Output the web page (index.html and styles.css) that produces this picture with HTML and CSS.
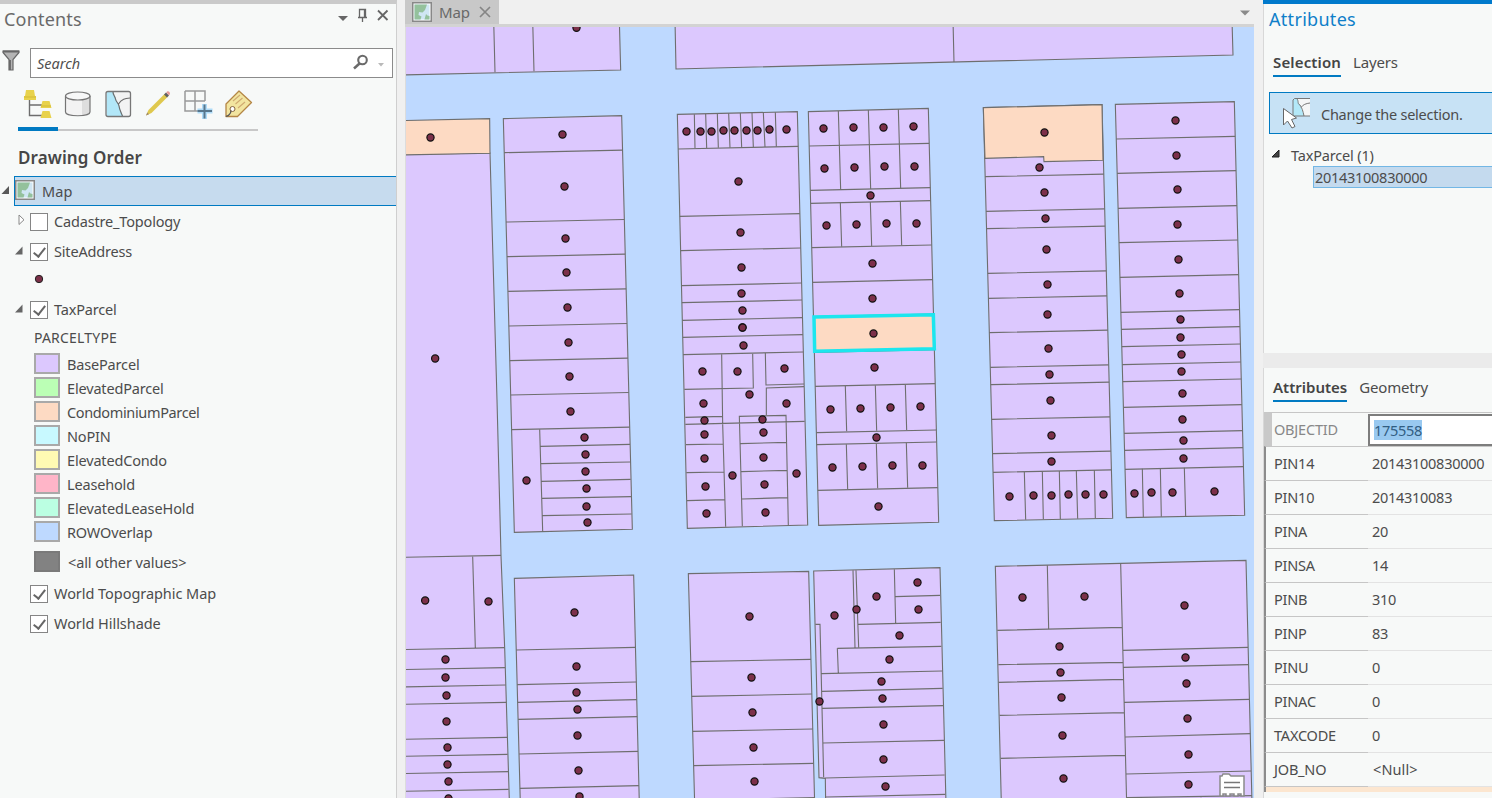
FILE: index.html
```html
<!DOCTYPE html>
<html lang="en">
<head>
<meta charset="utf-8">
<title>Map</title>
<link rel="stylesheet" href="styles.css">
</head>
<body>
<div class="app">
  <aside class="contents">
    <header class="pane-head">
      <h1>Contents</h1>
      <svg class="head-icons" width="60" height="20" viewBox="0 0 60 20"><path d="M2 11h10l-5 5z" fill="#666"/><path d="M23.500 4.500h6v8h-6zM22 12.500h9M26.500 13v4M28.500 5v7" fill="none" stroke="#666" stroke-width="1.300"/><path d="M42 5.500l9.500 9.500M51.500 5.500L42 15" stroke="#666" stroke-width="1.800"/></svg>
    </header>
    <div class="search-row">
      <svg width="18" height="22" viewBox="0 0 18 22"><path d="M1 1h16v1.500l-6 7V20H7V9.500l-6-7z" fill="#b4b4b4" stroke="#666" stroke-width="1.200"/><path d="M1 1.500h16M8 10v10" stroke="#666" stroke-width="1.800"/></svg>
      <div class="search"><span>Search</span>
        <svg width="36" height="20" viewBox="0 0 36 20"><circle cx="10.500" cy="7" r="4.300" fill="none" stroke="#6a6a6a" stroke-width="2.100"/><path d="M7.500 10.500l-5.500 5" stroke="#6a6a6a" stroke-width="2.500"/><path d="M26 10h6l-3 3.500z" fill="#b9b9b9"/></svg>
      </div>
    </div>
    <div class="tools">
      <svg width="240" height="34" viewBox="18 88 240 34">
        <path d="M29.500 100v15.500H42M29.500 105H42" fill="none" stroke="#6d6d6d" stroke-width="1.400"/>
        <path d="M26 90h8l1 6h1v4H24v-4h1zM42.500 101h7l2 7H40.500zM42.500 111h7l2 7H40.500z" fill="#e8d24c"/><path d="M24 97h12M41 106h10" stroke="#d3ba35"/>
        <path d="M65.500 96v16c0 5 24.500 5 24.500 0V96" fill="#f3f3f3"/><path d="M82 99l8-2.500V112c0 2-4 3.300-8 3.800z" fill="#dedede"/><path d="M65.500 96v16c0 5 24.500 5 24.500 0V96" fill="none" stroke="#757575" stroke-width="1.200"/><ellipse cx="77.750" cy="96" rx="12.250" ry="4" fill="#f7f8f8" stroke="#757575" stroke-width="1.200"/>
        <rect x="106" y="91.500" width="24.500" height="25" rx="2" fill="#f3f3f3"/><path d="M106.500 92h7c0 3 2 4 2.500 7 .5 3 3 4 3.500 7 .5 4 2 6 3.500 10h-16.500z" fill="#b2e7f8"/><path d="M113 92c0 3 2 4 2.500 7 .5 3 3 4 3.500 7 .5 4 2 6 3.500 10M118.500 104c3-5 7-5.500 11.500-6" fill="none" stroke="#6c6c6c" stroke-width="1.200"/><rect x="106" y="91.500" width="24.500" height="25" rx="2" fill="none" stroke="#777" stroke-width="1.300"/>
        <path d="M146 115.500l2.500-5.500 16-16 3 3-16 16z" fill="#dfc84e"/><path d="M146 115.500l1.300-3 1.700 1.700z" fill="#9d8870"/><path d="M164 94.500l2-2 3 3-2 2z" fill="#606060"/><path d="M166.200 92.200l1-.8c1.500-.5 3.500 1.500 2.500 3l-.8.800z" fill="#e89a98"/>
        <path d="M185 91h20v10M185 91v20h13M195 91v20M185 101h20" fill="none" stroke="#999" stroke-width="1.500"/><path d="M204.500 104v15M197.500 111h15" stroke="#aedbf7" stroke-width="5"/><path d="M204.500 104.500v14M197.500 111h14.500" stroke="#58778c" stroke-width="2"/>
        <path d="M226 104l13-13 12.500 11.500-14 14H226z" fill="#f2e5a0" stroke="#b48646" stroke-width="1.300" stroke-linejoin="round"/><path d="M233 101l7-6M235.500 104l7-6M238 108l7-6" stroke="#cfaa71" stroke-width="1.100"/><circle cx="232.500" cy="109" r="2.500" fill="#fff" stroke="#85633e"/><path d="M231 110.500c0 4-4 6-5 5.500" fill="none" stroke="#555" stroke-width="1.300"/>
      </svg>
    </div>
    <div class="tool-line"><i></i></div>
    <h2>Drawing Order</h2>
    <div class="map-row">
      <svg width="14" height="30" viewBox="0 0 14 30"><path d="M1.500 18L9 10v8z" fill="#595959"/></svg>
      <div class="selected"><svg class="map-icon" width="20" height="20" viewBox="0 0 20 20"><rect x=".75" y=".75" width="18.500" height="18.500" fill="#fff" stroke="#888" stroke-width="1.500"/><path d="M2.500 2.500h15v15h-15z" fill="#cfe6f3"/><path d="M2.500 2.500H15l-2 5.500-2.500 2.500-3.500-.5-.5 3 3 1.500L8.500 17.500h-6zM14 12l1.500 1.500 2 .5v3.500h-5z" fill="#94c19c"/></svg><span>Map</span></div>
    </div>
    <div class="row closed"><i class="arrow"><svg width="8" height="12" viewBox="0 0 8 12"><path d="M1 1l5 4.800L1 10.500z" fill="#fff" stroke="#888"/></svg></i><b class="check"></b><span>Cadastre_Topology</span></div>
    <div class="row"><i class="arrow"><svg width="9" height="9"><path d="M1 8.500L8.500.5v8z" fill="#666"/></svg></i><b class="check on"></b><span>SiteAddress</span></div>
    <div class="point-row"><svg width="10" height="10"><circle cx="5" cy="5" r="3.700" fill="#7b3048" stroke="#222"/></svg></div>
    <div class="row"><i class="arrow"><svg width="9" height="9"><path d="M1 8.500L8.500.5v8z" fill="#666"/></svg></i><b class="check on"></b><span>TaxParcel</span></div>
    <div class="field">PARCELTYPE</div>
    <ul class="legend">
      <li><i class="base"></i>BaseParcel</li>
      <li><i class="elevated"></i>ElevatedParcel</li>
      <li><i class="condo"></i>CondominiumParcel</li>
      <li><i class="nopin"></i>NoPIN</li>
      <li><i class="econdo"></i>ElevatedCondo</li>
      <li><i class="lease"></i>Leasehold</li>
      <li><i class="elease"></i>ElevatedLeaseHold</li>
      <li><i class="rowo"></i>ROWOverlap</li>
      <li class="other"><i></i>&lt;all other values&gt;</li>
    </ul>
    <div class="row base-layer"><i class="arrow"></i><b class="check on"></b><span>World Topographic Map</span></div>
    <div class="row base-layer"><i class="arrow"></i><b class="check on"></b><span>World Hillshade</span></div>
  </aside>

  <main class="view">
    <div class="tabs">
      <div class="tab"><svg width="20" height="20" viewBox="0 0 20 20"><rect x=".75" y=".75" width="18.500" height="18.500" fill="#fff" stroke="#888" stroke-width="1.500"/><path d="M2.500 2.500h15v15h-15z" fill="#cfe6f3"/><path d="M2.500 2.500H15l-2 5.500-2.500 2.500-3.500-.5-.5 3 3 1.500L8.500 17.500h-6zM14 12l1.500 1.500 2 .5v3.500h-5z" fill="#94c19c"/></svg><span>Map</span><svg width="12" height="12"><path d="M1 1l10 10M11 1L1 11" stroke="#858585" stroke-width="1.700"/></svg></div>
      <svg class="caret" width="10" height="6"><path d="M0 .5h10L5 5.500z" fill="#8a8a8a"/></svg>
    </div>
    <svg class="map" id="map" width="849" height="771" viewBox="406 27 848 771"></svg>
  </main>

  <aside class="attributes">
    <h1>Attributes</h1>
    <nav class="subtabs"><b>Selection</b><span>Layers</span></nav>
    <div class="change">
      <svg width="30" height="34" viewBox="0 0 30 34"><path d="M10 2.500h17V20H10z" fill="#f5f6f6"/><path d="M10 2.500h4c2 2 0 5 3 6 1 4 3 6 4 11.500H10z" fill="#b3e8f8"/><path d="M27 2.500H11.500L10 4v16h17M14 3c2 2 0 5 3 6 2 3 3 6 4 11M18 11.500c2-3 5-4 9-4.500" fill="none" stroke="#777"/><path d="M.5 12.500v16.500l4-4 4.500 7 3-1.500-3.500-7 5-1.500z" fill="#fff" stroke="#666"/></svg>
      <span>Change the selection.</span>
    </div>
    <div class="tree"><svg width="9" height="9"><path d="M1 8L8 1v7z" fill="#444" stroke="#222"/></svg><span>TaxParcel (1)</span></div>
    <div class="tree-item">20143100830000</div>
    <div class="splitter"></div>
    <nav class="subtabs lower"><b>Attributes</b><span>Geometry</span></nav>
    <div class="grid">
      <div class="attr active"><span>OBJECTID</span><div><mark>175558</mark></div></div>
      <div class="attr"><span>PIN14</span><div>20143100830000</div></div>
      <div class="attr"><span>PIN10</span><div>2014310083</div></div>
      <div class="attr"><span>PINA</span><div>20</div></div>
      <div class="attr"><span>PINSA</span><div>14</div></div>
      <div class="attr"><span>PINB</span><div>310</div></div>
      <div class="attr"><span>PINP</span><div>83</div></div>
      <div class="attr"><span>PINU</span><div>0</div></div>
      <div class="attr"><span>PINAC</span><div>0</div></div>
      <div class="attr"><span>TAXCODE</span><div>0</div></div>
      <div class="attr"><span>JOB_NO</span><div class="null">&lt;Null&gt;</div></div>
      <div class="band"></div>
    </div>
  </aside>
</div>
<script src="map.js"></script>
</body>
</html>
```
FILE: styles.css
```css
* { box-sizing: border-box; }
body { margin: 0; background: #f0f0f0; font: 14.5px/20px "Noto Sans", "Open Sans", sans-serif; color: #4c4c4c; letter-spacing: -0.17px; overflow: hidden; }
h1, h2, ul { margin: 0; padding: 0; font-weight: 400; list-style: none; }
h1 { font-size: 18px; line-height: 24px; letter-spacing: 0.2px; }
svg { display: block; flex: none; }
.app { display: grid; grid-template-columns: 397px 849px 230px; column-gap: 8px; width: 1492px; height: 798px; }

.contents { background: #f7f9f8; border-top: 4px solid #cacaca; border-right: 1px solid #cfcfcf; overflow: hidden; }
.pane-head { display: flex; justify-content: space-between; height: 44px; padding: 3px 0 0 4px; color: #6a6a6a; }
.head-icons { margin-top: -2px; }
.search-row { display: flex; height: 30px; padding: 0 3px 0 2px; gap: 10px; }
.search-row > svg { margin-top: 2px; }
.search { flex: 1; height: 30px; display: flex; justify-content: space-between; align-items: center; border: 1px solid #8b8b8b; background: #fff; padding: 0 4px 0 6px; font-style: italic; color: #505050; letter-spacing: 0; }
.tools { height: 49px; padding: 10px 0 0 18px; }
.tool-line { width: 240px; height: 4px; margin-left: 18px; border-bottom: 2px solid #c8c8c8; }
.tool-line i { display: block; width: 40px; height: 4px; background: #007ac2; }
.contents h2 { height: 45px; padding: 17px 0 0 18px; font-size: 17px; font-weight: 600; line-height: 20px; letter-spacing: 0.1px; color: #464646; }
.map-row { display: flex; height: 31px; }
.selected { flex: 1; height: 30px; display: flex; align-items: center; gap: 7px; border: 1px solid #007ac2; border-right-width: 0; background: #c6dbee; }
.selected span { letter-spacing: 0.1px; }
.map-icon { margin-top: -2px; }
.row { height: 30px; display: flex; align-items: center; }
.row span { margin-top: -2px; }
.base-layer span { letter-spacing: -0.05px; }
.arrow { width: 30px; padding: 0 0 4px 14px; }
.closed .arrow { padding-left: 18px; }
.check { width: 18px; height: 18px; margin-right: 6px; background: #fff; border: 1px solid #858585; }
.check.on::after { content: ""; display: block; width: 5px; height: 10px; margin: 1px 0 0 5px; border: solid #666; border-width: 0 2px 2px 0; transform: rotate(38deg); }
.point-row { height: 28px; padding: 7px 0 0 34px; }
.field { height: 27px; padding: 3px 0 0 34px; letter-spacing: 0.2px; font-size: 14px; }
.legend li { height: 24px; display: flex; align-items: center; gap: 7px; padding-left: 34px; }
.legend i { width: 26px; height: 21px; margin-top: -1px; border: 2px solid #a9a9a9; background: #dcc8fe; }
.legend .elevated { background: #bbffb5; }
.legend .condo { background: #fddac3; }
.legend .nopin { background: #c8f9ff; }
.legend .econdo { background: #fffab3; }
.legend .lease { background: #ffb5c8; }
.legend .elease { background: #bbffe2; }
.legend .rowo { background: #bed9ff; }
.legend li:nth-child(3) { letter-spacing: -0.36px; }
.legend li:nth-child(7) { letter-spacing: -0.08px; }
.legend .other { height: 35px; gap: 8px; letter-spacing: -0.1px; }
.legend .other i { background: #828282; border-color: #7a7a7a; }

.view { display: flex; flex-direction: column; overflow: hidden; }
.tabs { height: 27px; display: flex; justify-content: space-between; border-bottom: 3px solid #d3d3d3; padding-right: 4px; }
.tab { width: 94px; height: 24px; display: flex; align-items: center; gap: 7px; padding-left: 7px; background: #c8c8c8; color: #686868; font-size: 15px; }
.tab svg:last-child { margin-left: 2px; }
.caret { margin-top: 10px; }
.map { background: #bed9ff; border-left: 1px solid #dcdcdc; }
.map .parcel, .map .line { stroke: #6e6e6e; stroke-width: 1.1px; vector-effect: non-scaling-stroke; }
.map .parcel { fill: #dcc8fe; }
.map .condo { fill: #fddac3; }
.map .line { fill: none; }
.map .picked { fill: #fddac3; stroke: #1ce6ee; stroke-width: 3.5px; vector-effect: non-scaling-stroke; }
.map .dot { fill: #7c304a; stroke: #101010; stroke-width: 1.2px; vector-effect: non-scaling-stroke; }

.attributes { margin-left: 1px; width: 229px; background: #f7f9f8; border-top: 4px solid #007acc; box-shadow: inset 1px 0 #d8d8d8; overflow: hidden; }
.attributes h1 { height: 48px; padding: 3px 0 0 6px; color: #0f7fc9; letter-spacing: 0.3px; }
.subtabs { height: 40px; display: flex; gap: 12px; padding-left: 10px; font-size: 15px; }
.subtabs > * { height: 25px; }
.subtabs b { font-weight: 600; letter-spacing: 0.15px; border-bottom: 2px solid #007ac2; color: #444; }
.change { height: 42px; margin-left: 6px; display: flex; align-items: center; gap: 8px; padding-left: 13px; border: 1px solid #007ac2; border-right: 0; background: #c7e2f5; white-space: nowrap; letter-spacing: -0.25px; }
.change span { margin-top: 2px; }
.tree { height: 32px; display: flex; align-items: center; gap: 11px; padding: 9px 0 0 8px; }
.tree svg { margin-top: -3px; }
.tree-item { margin-left: 50px; height: 22px; padding-left: 1px; border: 1px solid #73b7e5; border-right: 0; background: #c4daee; letter-spacing: -0.28px; }
.splitter { margin-top: 165px; height: 15px; background: #ebebeb; }
.lower { height: 44px; padding-top: 9px; }
.lower b { letter-spacing: 0; }
.grid { width: 232px; padding-left: 1px; }
.attr { display: grid; grid-template-columns: 102px 1fr; height: 34px; border-left: 2px solid #8c8c8c; border-top: 1px solid #c6c6c6; line-height: 33px; white-space: nowrap; }
.attr span { padding-left: 8px; letter-spacing: -0.2px; }
.attr div { padding-left: 4px; border-bottom: 1px solid #e3e3e3; letter-spacing: -0.28px; }
.attr .null { padding-left: 5px; letter-spacing: 0.1px; }
.attr.active { border-left: 8px solid #c9c9c9; grid-template-columns: 96px 1fr; }
.attr.active span { padding-left: 2px; color: #888; }
.attr.active div { margin-top: 1px; height: 32px; border: 2px solid #7d7d7d; background: #fff; padding: 4px 0 0 4px; line-height: 20px; }
mark { display: inline-block; background: #99c9f0; color: #325d82; }
.band { height: 6px; border-left: 2px solid #8c8c8c; border-top: 1px solid #c6c6c6; background: #fce6d0; }
```
FILE: map.js
```js
// Parcel geometry, grouped in local sheets drawn at a third of their unit size.
// cols: [corner quad tl,tr,br,bl], left-edge y of each lot line, fall from left to right
const sheets = [
  { x: 400, y: 0,
    parcels: ["M0 60H658L662 210L0 225Z", "M825 60H2496L2499 165L828 207Z", "M0 464L270 459L291 1200L303 1667L314 1943L328 2400H0Z"],
    condos: ["M0 362L269 356L270 460L0 465Z"],
    lines: "M281 60L285 217M398 60L402 214M1659 60L1662 186",
    cols: [[[310, 356, 665, 347, 697, 1588, 343, 1597], [458, 666, 770, 874, 978, 1082, 1185, 1289], 7.5]],
    dots: [529, 83, 91, 412, 105, 1075, 487, 403, 493, 559, 496, 715, 499, 817, 502, 922, 505, 1027, 508, 1129, 511, 1234] },
  { x: 400, y: 400,
    lines: "M0 472L303 466M218 469L226 743M0 749L314 743M0 809L315 803M0 861L317 855M0 913L319 907M0 1018L321 1012M0 1069L323 1063M0 1121L324 1115M0 1174L326 1168M419 88L428 393M422 139L690 133M423 191L691 186M424 244L692 238M426 295L693 290M427 347L695 342",
    cols: [[[343, 535, 701, 525, 718, 1210, 361, 1210], [750, 854, 907, 958, 1062, 1165], 8]],
    dots: [75, 601, 265, 604, 136, 778, 136, 832, 139, 886, 139, 964, 142, 1042, 142, 1093, 145, 1144, 145, 1195, 379, 241, 553, 112, 556, 163, 556, 214, 559, 265, 559, 319, 562, 367, 523, 637, 529, 799, 529, 877, 532, 928, 532, 1006, 535, 1111, 538, 1189] },
  { x: 670, y: 90,
    cols: [[[22, 73, 382, 65, 413, 1305, 52, 1315], [177, 379, 482, 587, 638, 691, 742, 794], 8],
           [[415, 65, 775, 55, 806, 1297, 446, 1306], [168, 301, 340, 473, 577, 680, 787, 889, 1028, 1064, 1201], 8]],
    lines: "M73 73L75 174M107 72L110 174M142 71L145 173M176 70L180 173M211 69L215 172M246 69L250 171M280 68L285 171M316 67L319 170M505 63L512 299M595 60L602 297M685 58L692 295M511 338L515 470M601 336L605 468M691 333L695 466",
    dots: [49, 124, 91, 124, 124, 124, 160, 121, 193, 121, 229, 121, 262, 121, 298, 118, 349, 118, 205, 274, 211, 427, 214, 532, 214, 610, 217, 661, 217, 712, 460, 115, 550, 112, 640, 112, 730, 109, 463, 235, 553, 232, 643, 229, 733, 229, 601, 316, 469, 406, 559, 403, 649, 400, 739, 400, 607, 520, 607, 625] },
  { x: 670, y: 320,
    picked: "M432 -9L790 -16L793 86L434 94Z",
    lines: "M155 103L158 311L167 620M43 208L250 204L248 101M286 99L288 195L402 192M289 285V204L402 200M46 292L158 289M46 313L404 304M217 619L208 289L348 286L355 617M48 374L160 372M49 458L162 456M51 542L165 539M211 371L350 367M214 455L352 451M216 537L354 533M526 198L530 334M616 196L620 332M706 194L710 330M529 373L533 508M619 371L623 505M709 368L713 503",
    dots: [217, 22, 220, 76, 97, 154, 202, 154, 343, 145, 100, 250, 238, 223, 349, 250, 103, 301, 277, 298, 103, 343, 280, 337, 103, 415, 280, 412, 187, 466, 379, 460, 106, 499, 283, 493, 109, 580, 286, 577, 610, 40, 613, 142, 481, 268, 571, 265, 661, 262, 751, 259, 619, 352, 487, 442, 577, 439, 667, 436, 757, 436, 625, 559] },
  { x: 670, y: 560,
    parcels: ["M431 33L810 23L828 730H467L466 655L447 653Z"],
    cols: [[[55, 41, 416, 34, 434, 730, 74, 730], [305, 409, 514, 617, 720], 7]],
    lines: "M436 193H450L461 652M549 31L555 263M558 31L566 262M673 28L677 189M675 110L810 106M565 193L812 187M502 265L814 259M502 265L505 340M455 341L817 333M456 394L818 385M457 445L819 437M459 549L822 541M466 654L824 645M467 711L826 703",
    dots: [238, 169, 244, 352, 247, 457, 250, 562, 253, 664, 742, 67, 619, 109, 559, 148, 745, 148, 493, 166, 688, 226, 658, 298, 634, 364, 448, 424, 637, 415, 640, 493, 640, 598, 646, 679] },
  { x: 970, y: 90,
    cols: [[[40, 53, 396, 44, 428, 1285, 73, 1292], [260, 364, 416, 550, 625, 728, 832, 884, 988, 1091, 1147], 7.5],
           [[436, 43, 793, 35, 824, 1276, 469, 1283], [147, 250, 355, 458, 562, 667, 718, 770, 824, 875, 952, 1030, 1081, 1138], 8]],
    condos: ["M40 53L396 44L399 211L222 215L221 200L45 205Z"],
    lines: "M163 1146L167 1289M217 1144L220 1288M268 1143L271 1287M319 1142L323 1286M373 1140L376 1285M517 1136L520 1281M571 1134L574 1280M643 1133L647 1279",
    dots: [223, 127, 208, 232, 223, 307, 226, 385, 229, 478, 232, 583, 232, 673, 235, 775, 238, 853, 241, 931, 244, 1036, 244, 1114, 118, 1219, 190, 1216, 244, 1216, 295, 1213, 346, 1213, 400, 1213, 616, 91, 619, 196, 622, 298, 622, 403, 625, 508, 628, 610, 631, 688, 631, 742, 634, 793, 634, 844, 637, 910, 637, 988, 640, 1051, 640, 1105, 493, 1210, 544, 1207, 607, 1207, 733, 1204] },
  { x: 970, y: 540,
    parcels: ["M76 79L828 61L846 790H94Z"],
    lines: "M452 71L470 790M232 76L236 267M82 271L457 262M85 374L459 367M86 427L461 418M89 526L463 518M92 655L466 646M458 331L834 322M460 382L835 374M463 487L838 478M466 591L841 581M468 702L843 693M470 773L846 767M693 773V790",
    dots: [157, 172, 343, 169, 643, 196, 268, 319, 271, 397, 274, 472, 277, 586, 280, 715, 646, 352, 649, 430, 652, 535, 655, 643, 655, 733] }
];

const path = (cls, d) => `<path class="${cls}" d="${d}"/>`;

function column([q, rows, fall]) {
  const [ax, ay, bx, by, cx, cy, dx, dy] = q;
  let d = "";
  for (const y of rows) {
    const left = ax + (dx - ax) * (y - ay) / (dy - ay);
    const right = bx + (cx - bx) * (y - fall - by) / (cy - by);
    d += `M${left.toFixed(1)} ${y}L${right.toFixed(1)} ${y - fall}`;
  }
  return path("parcel", `M${ax} ${ay}L${bx} ${by}L${cx} ${cy}L${dx} ${dy}Z`) + path("line", d);
}

const layers = [
  s => (s.parcels || []).map(d => path("parcel", d)).join("") + (s.cols || []).map(column).join(""),
  s => (s.condos || []).map(d => path("parcel condo", d)).join("") + path("line", s.lines),
  s => s.picked ? path("picked", s.picked) : "",
  s => {
    let out = "";
    for (let i = 0; i < s.dots.length; i += 2) out += `<circle class="dot" cx="${s.dots[i] + 0.5}" cy="${s.dots[i + 1] + 0.5}" r="10.8"/>`;
    return out;
  }
];

const notes = `<g transform="translate(1219 773)"><path d="M1 3h2l1-2h6l2 2h13v20h-3v-2h-3v2h-4v-2h-4v2H7v-2H4v2H1z" fill="#fff" stroke="#8a8a8a" stroke-width="1.500"/><path d="M5 9.500h16M5 14.500h16" stroke="#777" stroke-width="1.500"/></g>`;

document.getElementById("map").innerHTML = layers.map(layer =>
  sheets.map(s => `<g transform="translate(${s.x} ${s.y}) scale(.33333)">${layer(s)}</g>`).join("")
).join("") + notes;
```
